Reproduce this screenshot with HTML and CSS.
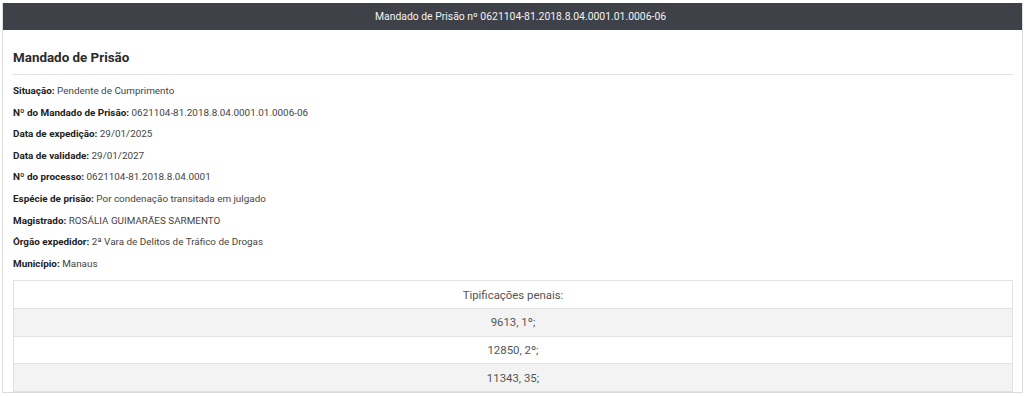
FILE: index.html
```html
<!DOCTYPE html>
<html lang="pt-BR">
<head>
<meta charset="utf-8">
<title>Mandado de Prisão</title>
<link rel="stylesheet" href="styles.css">
</head>
<body>
<div class="panel">
  <div class="panel-heading">Mandado de Prisão nº 0621104-81.2018.8.04.0001.01.0006-06</div>
  <div class="panel-body">
    <h3 class="title">Mandado de Prisão</h3>
    <div class="fields">
      <p><b>Situação:</b> Pendente de Cumprimento</p>
      <p><b>Nº do Mandado de Prisão:</b> 0621104-81.2018.8.04.0001.01.0006-06</p>
      <p><b>Data de expedição:</b> 29/01/2025</p>
      <p><b>Data de validade:</b> 29/01/2027</p>
      <p><b>Nº do processo:</b> 0621104-81.2018.8.04.0001</p>
      <p><b>Espécie de prisão:</b> Por condenação transitada em julgado</p>
      <p><b>Magistrado:</b> ROSÁLIA GUIMARÃES SARMENTO</p>
      <p><b>Órgão expedidor:</b> 2ª Vara de Delitos de Tráfico de Drogas</p>
      <p><b>Município:</b> Manaus</p>
    </div>
    <table class="tip">
      <thead><tr><th>Tipificações penais:</th></tr></thead>
      <tbody>
        <tr class="odd"><td>9613, 1º;</td></tr>
        <tr><td>12850, 2º;</td></tr>
        <tr class="odd"><td>11343, 35;</td></tr>
      </tbody>
    </table>
  </div>
</div>
</body>
</html>
```
FILE: styles.css
```css
html, body {
  margin: 0;
  padding: 0;
  background: #fff;
}
body {
  padding: 3px 1px 0 2px;
  font-family: Roboto, "Liberation Sans", Arial, sans-serif;
  color: #333;
}
.panel {
  border: 1px solid #dcdcdc;
  border-top: none;
}
.panel-heading {
  background: #3f4148;
  color: #f2f2f2;
  text-align: center;
  font-size: 10.4px;
  height: 27px;
  line-height: 27px;
  padding-left: 16px;
}
.panel-body {
  padding: 19px 9px 0 10px;
}
.title {
  margin: 0;
  font-size: 13.4px;
  font-weight: 700;
  color: #2b2b2b;
  line-height: 18px;
  padding-bottom: 7px;
  border-bottom: 1px solid #e2e2e2;
}
.fields {
  padding-top: 5px;
}
.fields p {
  margin: 0;
  font-size: 9.9px;
  line-height: 21.6px;
  color: #444;
}
.fields b {
  color: #222;
}
.tip {
  margin-top: 6px;
  width: 100%;
  border-collapse: collapse;
  border: 1px solid #e2e2e2;
  font-size: 11.4px;
  color: #555;
}
.tip th, .tip td {
  text-align: center;
  font-weight: 400;
  height: 26.7px;
  padding: 0;
  border-top: 1px solid #e2e2e2;
}
.tip tr.odd td {
  background: #f3f3f3;
}
```
